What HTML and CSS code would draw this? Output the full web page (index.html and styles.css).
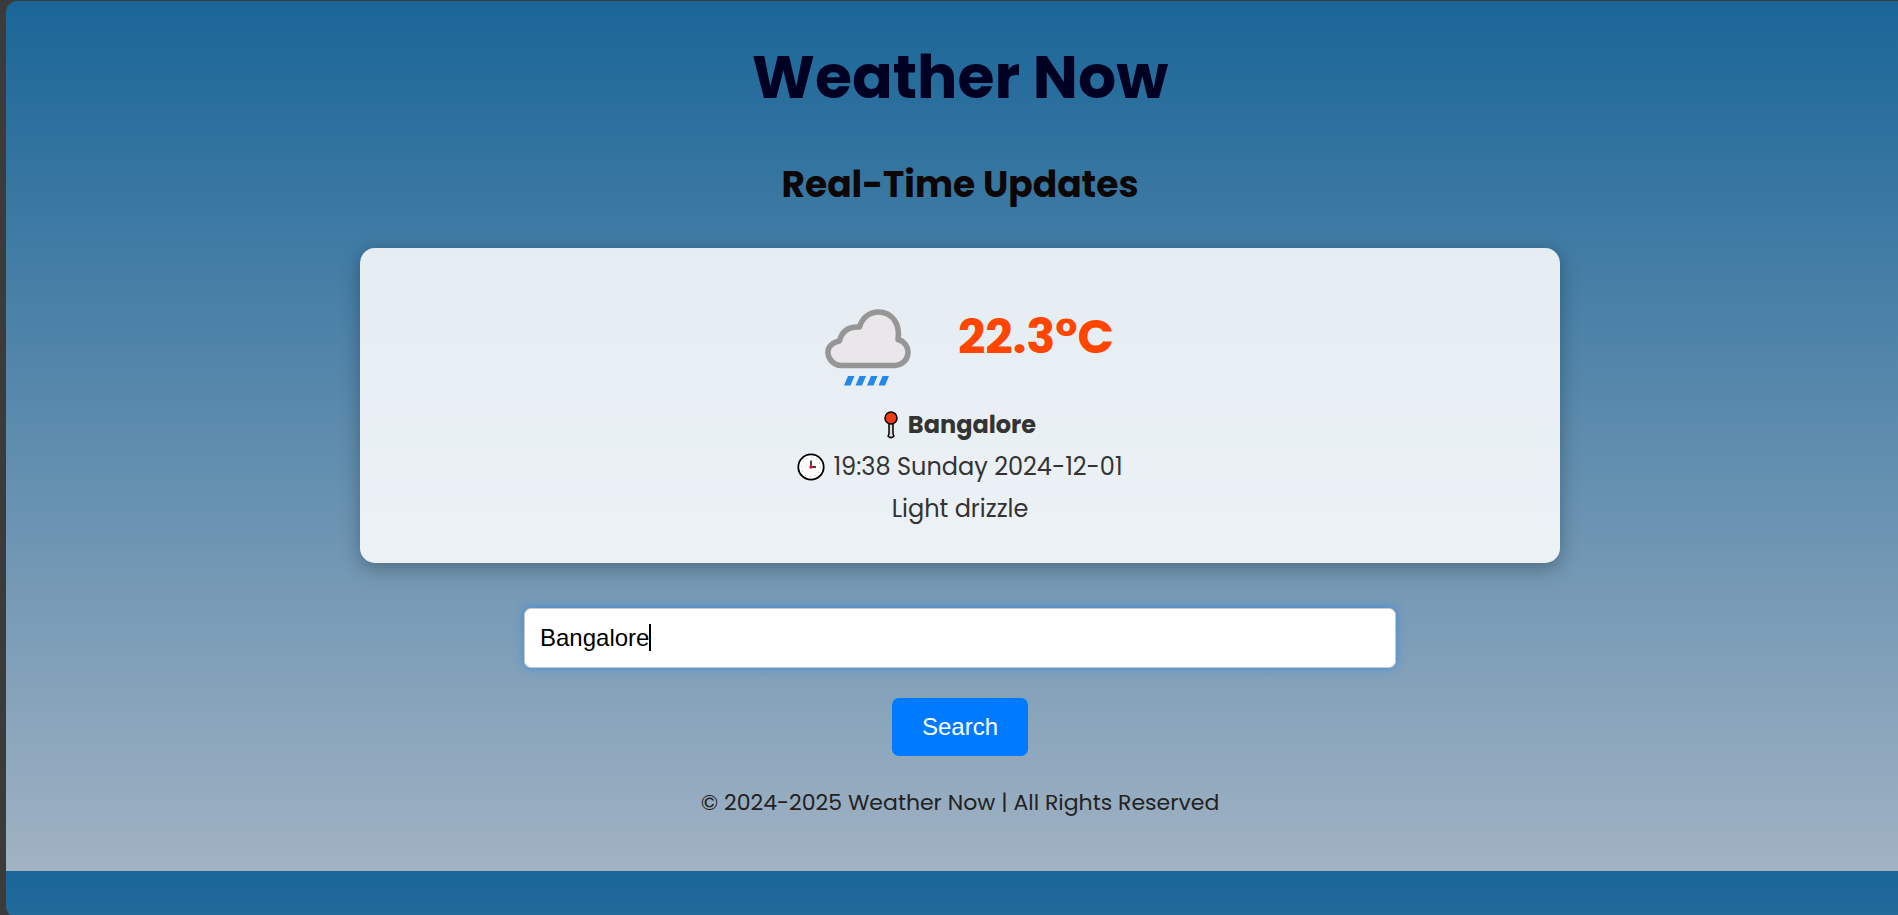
FILE: index.html
```html
<!DOCTYPE html>
<html lang="en">
<head>
<meta charset="utf-8">
<meta name="viewport" content="width=device-width, initial-scale=1">
<title>Weather Now</title>
<link rel="stylesheet" href="styles.css">
</head>
<body>
<div class="page">
  <div class="app">
    <header class="header">
      <h1 class="title">Weather Now</h1>
    </header>
    <main class="main">
      <h2 class="subtitle">Real-Time Updates</h2>
      <section class="card" aria-label="Current weather">
        <div class="summary">
          <svg class="weather-icon" viewBox="0 0 124 124" role="img" aria-label="Light drizzle">
            <path d="M36 85.500H89A13.200 13.200 0 0 0 92 59.500C94.500 44 86 32 72.500 32C63 32 56 38 53.500 47Q37 46 33.500 61C24 63 20.500 69 22.500 76Q26 85.500 36 85.500Z" fill="#e9e7e9" stroke="#969696" stroke-width="5.500" stroke-linejoin="round"/>
            <path d="M42 96h6.500l-4 9.500H38zM53.500 96H60l-4 9.500h-6.500zM65 96h6.500l-4 9.500H61zM76.500 96H83l-4 9.500h-6.500z" fill="#2389e4"/>
          </svg>
          <p class="temperature">22.3°C</p>
        </div>
        <p class="line place">
          <svg class="pin" viewBox="0 0 14 28" aria-hidden="true">
            <path d="M5 12v10.500l-.9 2.800q2.900 2.600 5.800 0L9 22.500V12z" fill="#ddd" stroke="#000" stroke-width="1.500"/>
            <circle cx="7" cy="7" r="6" fill="#f03a17" stroke="#000" stroke-width="1.500"/>
          </svg>
          <span>Bangalore</span>
        </p>
        <p class="line">
          <svg class="clock" viewBox="0 0 28 28" aria-hidden="true">
            <circle cx="14" cy="14" r="12.700" fill="#fff" stroke="#000" stroke-width="1.800"/>
            <circle cx="14" cy="14" r="9.500" fill="none" stroke="#bbb" stroke-width="1.200" stroke-dasharray="1 3.974"/>
            <path d="M14 7.500V14h5" fill="none" stroke="#000" stroke-width="1.400"/>
            <circle cx="14" cy="14" r="1.700" fill="#e81224"/>
          </svg>
          <span>19:38 Sunday 2024-12-01</span>
        </p>
        <p class="line">Light drizzle</p>
      </section>
      <form class="search">
        <div class="field">
          <input class="search-input" type="text" value="Bangalore" aria-label="City">
          <span class="caret" aria-hidden="true"></span>
        </div>
        <button class="search-button" type="button">Search</button>
      </form>
    </main>
    <footer class="footer">© 2024-2025 Weather Now | All Rights Reserved</footer>
  </div>
</div>
</body>
</html>
```
FILE: styles.css
```css
* {
  box-sizing: border-box;
}

html {
  background: #3b3b3b;
  overflow: hidden;
}

body {
  margin: 0;
  padding: 1px 0 0 6px;
  font-family: Poppins, Inter, sans-serif;
  color: #333;
}

h1, h2, p {
  margin: 0;
}

.page {
  overflow: hidden;
  border-radius: 12px 0 0 12px;
  padding-bottom: 47px;
  background: linear-gradient(#1a6698, #1a6698 calc(100% - 47px), #226b9b);
}

.app {
  display: flex;
  flex-direction: column;
  align-items: center;
  padding: 31px 0 47px 16px;
  background: linear-gradient(#1a6698, #a1b2c3);
}

.title {
  font-size: 60px;
  line-height: 90px;
  color: #000022;
}

.main {
  display: flex;
  flex-direction: column;
  align-items: center;
  width: 100%;
  padding-top: 36px;
}

.subtitle {
  font-size: 36px;
  line-height: 54px;
  color: #0d0606;
}

.card {
  width: 100%;
  max-width: 1200px;
  margin-top: 36px;
  padding: 32px 30px 33px;
  border-radius: 15px;
  background: rgba(255, 255, 255, 0.865);
  box-shadow: 0 5px 19px rgba(0, 0, 0, 0.3);
  font-size: 24px;
  text-align: center;
}

.summary {
  display: flex;
  justify-content: center;
  gap: 28px;
}

.weather-icon {
  width: 124px;
  height: 124px;
}

.temperature {
  font-size: 48px;
  font-weight: 700;
  line-height: 114px;
  color: #ff4500;
}

.line {
  display: flex;
  justify-content: center;
  align-items: center;
  gap: 8px;
  line-height: 42px;
}

.place {
  gap: 10px;
  font-weight: 700;
}

.pin {
  width: 14px;
  height: 28px;
}

.clock {
  width: 28px;
  height: 28px;
}

.search {
  display: flex;
  flex-direction: column;
  align-items: center;
  gap: 30px;
  width: 100%;
  margin-top: 45px;
}

.field {
  position: relative;
  width: 100%;
  max-width: 872px;
}

.search-input {
  display: block;
  width: 100%;
  height: 60px;
  padding: 0 15px;
  border: 1px solid #ccc;
  border-radius: 7px;
  outline: none;
  background: #fff;
  box-shadow: 0 0 10px rgba(0, 123, 255, 0.5);
  font-family: "Liberation Sans", Arial, sans-serif;
  font-size: 24px;
  color: #000;
}

.caret {
  position: absolute;
  top: 16px;
  left: 125px;
  width: 2px;
  height: 27px;
  background: #000;
}

.search-button {
  height: 58px;
  padding: 0 30px;
  border: 0;
  border-radius: 7px;
  background: #007bff;
  font-family: "Liberation Sans", Arial, sans-serif;
  font-size: 24px;
  color: #fff;
}

.footer {
  margin-top: 26px;
  font-size: 22px;
  line-height: 42px;
  color: #222;
}
```
